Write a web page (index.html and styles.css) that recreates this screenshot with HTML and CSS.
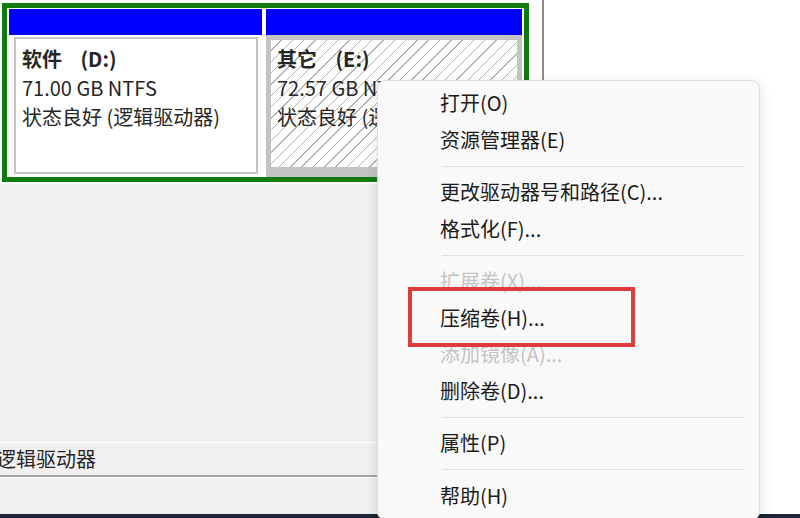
FILE: index.html
```html
<!DOCTYPE html>
<html lang="zh-CN">
<head>
    <meta charset="UTF-8">
    <meta name="viewport" content="width=device-width, initial-scale=1.0">
    <title>磁盘管理</title>
    <link rel="stylesheet" href="styles.css">
</head>
<body>

    <div class="screen">
        <!-- Mapa del disco -->
        <div class="disk-pane">
            <div class="disk-map">
                <div class="extended">
                    <div class="volume volume-d">
                        <div class="vol-bar"></div>
                        <div class="vol-body">
                            <div class="vol-frame">
                                <p class="vol-name">软件 (D:)</p>
                                <p>71.00 GB NTFS</p>
                                <p>状态良好 (逻辑驱动器)</p>
                            </div>
                        </div>
                    </div>
                    <div class="volume volume-e">
                        <div class="vol-bar"></div>
                        <div class="vol-body selected">
                            <p class="vol-name">其它 (E:)</p>
                            <p>72.57 GB NTFS</p>
                            <p>状态良好 (逻辑驱动器)</p>
                        </div>
                    </div>
                </div>
            </div>
            <div class="disk-empty"></div>
            <div class="legend"><span>逻辑驱动器</span></div>
            <div class="legend-foot"></div>
        </div>
        <div class="side-pane"></div>
    </div>
    <div class="taskbar"></div>

    <!-- Menu contextual -->
    <div class="context-menu">
        <div class="menu-item">打开(O)</div>
        <div class="menu-item">资源管理器(E)</div>
        <div class="menu-sep"></div>
        <div class="menu-item">更改驱动器号和路径(C)...</div>
        <div class="menu-item">格式化(F)...</div>
        <div class="menu-sep"></div>
        <div class="menu-item disabled">扩展卷(X)...</div>
        <div class="menu-item">压缩卷(H)...</div>
        <div class="menu-item disabled">添加镜像(A)...</div>
        <div class="menu-item">删除卷(D)...</div>
        <div class="menu-sep"></div>
        <div class="menu-item">属性(P)</div>
        <div class="menu-sep"></div>
        <div class="menu-item">帮助(H)</div>
        <div class="highlight-box"></div>
    </div>

</body>
</html>
```

FILE: styles.css
```css
body {
    margin: 0;
    width: 800px;
    height: 518px;
    overflow: hidden;
    position: relative;
    background-color: #ffffff;
    font-family: "Noto Sans CJK SC", "Noto Sans", sans-serif;
    font-size: 20px;
    color: #262626;
}

p {
    margin: 0;
}

.screen {
    display: flex;
    height: 514px;
}

.disk-pane {
    width: 542px;
    display: flex;
    flex-direction: column;
    background-color: #f0f0f0;
}

.side-pane {
    flex: 1;
    border-left: 2px solid #8c8c8c;
    background-color: #ffffff;
}

.disk-map {
    height: 184px;
    box-sizing: border-box;
    padding: 3px 0 0 2px;
    background-color: #ffffff;
}

/* Particion extendida (marco verde) */
.extended {
    width: 527px;
    height: 179px;
    box-sizing: border-box;
    border: 5px solid #0f7b0f;
    padding: 1px 2px 0;
    display: flex;
    gap: 4px;
}

.volume {
    display: flex;
    flex-direction: column;
    white-space: nowrap;
    line-height: 29px;
}

.volume-d {
    width: 253px;
}

.volume-e {
    flex: 1;
    min-width: 0;
}

.vol-bar {
    height: 26px;
    background-color: #0000ff;
}

.vol-body {
    flex: 1;
    background-color: #ffffff;
    padding: 2px 4px 3px 5px;
    display: flex;
    overflow: hidden;
}

.vol-frame {
    flex: 1;
    border: 2px solid #c4c4c4;
    padding: 5px 6px;
}

.vol-body.selected {
    display: block;
    border: 5px solid #c3c3c3;
    border-bottom-width: 10px;
    padding: 4px 6px;
    background: repeating-linear-gradient(135deg, #ffffff 0 7px, #b4b4b4 7px 8px);
}

.vol-name {
    font-weight: bold;
    word-spacing: 14px;
}

.disk-empty {
    flex: 1;
    border-bottom: 1px solid #ffffff;
}

.legend {
    height: 32px;
    line-height: 32px;
    border-bottom: 2px solid #a6a6a6;
    overflow: hidden;
    white-space: nowrap;
}

.legend span {
    margin-left: -4px;
}

.legend-foot {
    height: 36px;
    border-top: 1px solid #ffffff;
}

.taskbar {
    height: 4px;
    background-color: #1d2536;
}

/* Menu contextual */
.context-menu {
    position: absolute;
    left: 377px;
    top: 80px;
    width: 383px;
    height: 440px;
    box-sizing: border-box;
    padding: 4px 14px 0 62px;
    background-color: #f9f9f9;
    border: 1px solid #dedede;
    border-radius: 8px;
    box-shadow: 0 4px 14px rgba(0, 0, 0, 0.12);
}

.menu-item {
    height: 36.5px;
    line-height: 36.5px;
    color: #1b1b1b;
    white-space: nowrap;
}

.menu-item.disabled {
    color: #c4c4c4;
}

.menu-sep {
    height: 1px;
    margin: 7.5px 0 7.5px 2px;
    background-color: #e0e0e0;
}

.highlight-box {
    position: absolute;
    left: 30px;
    top: 206px;
    width: 227px;
    height: 60px;
    box-sizing: border-box;
    border: 4px solid #e0393e;
}
```
